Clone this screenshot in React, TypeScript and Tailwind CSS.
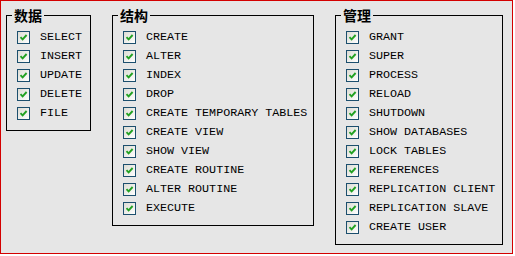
import React from 'react';

const groups = [
  { title: '数据', width: 'w-[85px]', items: ['SELECT', 'INSERT', 'UPDATE', 'DELETE', 'FILE'] },
  {
    title: '结构',
    width: 'w-[202px]',
    items: [
      'CREATE',
      'ALTER',
      'INDEX',
      'DROP',
      'CREATE TEMPORARY TABLES',
      'CREATE VIEW',
      'SHOW VIEW',
      'CREATE ROUTINE',
      'ALTER ROUTINE',
      'EXECUTE',
    ],
  },
  {
    title: '管理',
    width: 'w-[168px]',
    items: [
      'GRANT',
      'SUPER',
      'PROCESS',
      'RELOAD',
      'SHUTDOWN',
      'SHOW DATABASES',
      'LOCK TABLES',
      'REFERENCES',
      'REPLICATION CLIENT',
      'REPLICATION SLAVE',
      'CREATE USER',
    ],
  },
];

const CheckBox: React.FC = () => (
  <span className="flex h-[13px] w-[13px] shrink-0 items-center justify-center border border-[#1c4f6e] bg-gradient-to-br from-[#dcdcd4] to-[#ffffff]">
    <svg width="9" height="9" viewBox="0 0 9 9">
      <path d="M1.5 4.2 L3.6 6.3 L7.6 2" fill="none" stroke="#21a121" strokeWidth="1.9" />
    </svg>
  </span>
);

export default function App() {
  return (
    <div className="h-[254px] w-[513px] border border-[#d40000] bg-[#e6e6e6] pl-[5px] pt-[6px]">
      <div className="flex items-start gap-[21px]">
        {groups.map((g) => (
          <fieldset
            key={g.title}
            className={`${g.width} border border-black pb-[7px] pl-[10px] pt-[5px]`}
          >
            <legend
              className="-ml-[5px] px-[2px] text-[14px] font-bold leading-[16px] text-black"
              style={{ fontFamily: '"Noto Sans CJK SC", sans-serif' }}
            >
              {g.title}
            </legend>
            <div className="flex flex-col">
              {g.items.map((item) => (
                <label key={item} className="flex h-[19px] items-center gap-[10px]">
                  <CheckBox />
                  <span
                    className="whitespace-pre text-[11.7px] font-normal text-black"
                    style={{ fontFamily: '"Liberation Mono", monospace' }}
                  >
                    {item}
                  </span>
                </label>
              ))}
            </div>
          </fieldset>
        ))}
      </div>
    </div>
  );
}
